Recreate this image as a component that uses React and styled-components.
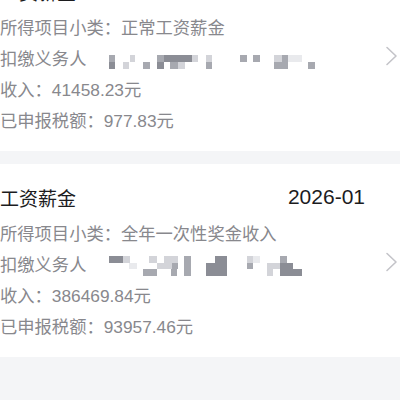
import React from 'react';
import styled, { createGlobalStyle } from 'styled-components';

const GlobalStyle = createGlobalStyle`
  html, body {
    margin: 0;
    padding: 0;
    background: #f4f5f7;
  }
  body {
    width: 400px;
    height: 400px;
    overflow: hidden;
    font-family: 'Liberation Sans', 'Noto Sans CJK SC', sans-serif;
  }
`;

const List = styled.div`
  display: flex;
  flex-direction: column;
  gap: 13px;
  margin-top: -42px;
`;

const Card = styled.div`
  display: flex;
  align-items: center;
  height: 193px;
  box-sizing: border-box;
  background: #ffffff;
  padding: 18px 2px 15px 0;
`;

const Content = styled.div`
  flex: 1;
  display: flex;
  flex-direction: column;
  align-self: stretch;
  margin-right: 20px;
`;

const TitleRow = styled.div`
  display: flex;
  align-items: center;
  justify-content: space-between;
  height: 30px;
  margin-bottom: 5px;
`;

const Title = styled.span`
  font-size: 19px;
  color: #1c1c1e;
`;

const Period = styled.span`
  font-size: 21px;
  color: #1c1c1e;
`;

const Row = styled.div`
  display: flex;
  align-items: center;
  height: 31px;
  font-size: 17.3px;
  color: #88888d;
  white-space: nowrap;
`;

const Mosaic = styled.svg`
  flex: none;
  margin-left: 14px;
`;

const Chevron = styled.svg`
  flex: none;
`;

const tones = {
  d: '#8b8d95',
  m: '#a7a9b0',
  l: '#d3d4d9',
  xl: '#e9eaed',
};

const blur1 = [
  [9, 9, 6, 'm'], [30, 9, 5, 'l'], [57, 9, 7, 'm'], [64, 9, 28, 'd'], [92, 9, 6, 'l'],
  [106, 9, 6, 'l'], [140, 9, 7, 'm'], [153, 9, 7, 'm'], [174, 9, 8, 'l'], [182, 9, 6, 'm'],
  [188, 9, 14, 'xl'],
  [9, 16, 6, 'd'], [23, 16, 6, 'l'], [43, 16, 7, 'm'], [57, 16, 7, 'd'], [70, 16, 8, 'm'],
  [78, 16, 7, 'l'], [106, 16, 6, 'm'], [174, 16, 14, 'm'], [208, 16, 7, 'm'],
];

const blur2 = [
  [9, 4, 14, 'd', 7], [23, 4, 7, 'l', 7], [49, 4, 8, 'l', 7], [64, 4, 8, 'l', 7], [72, 4, 6, 'l', 7],
  [84, 4, 7, 'm', 7], [115, 4, 12, 'd', 7], [147, 4, 6, 'l', 7], [153, 4, 7, 'xl', 7], [180, 4, 7, 'm', 7],
  [29, 11, 8, 'xl', 6], [57, 11, 7, 'l', 6], [64, 11, 8, 'l', 6], [72, 11, 6, 'm', 6], [84, 11, 7, 'm', 6],
  [106, 11, 21, 'd', 6], [147, 11, 6, 'm', 6], [167, 11, 13, 'l', 6], [180, 11, 13, 'd', 6],
  [43, 17, 14, 'm', 7], [71, 17, 6, 'm', 7], [84, 17, 7, 'm', 7], [106, 17, 21, 'd', 7],
  [167, 17, 6, 'l', 7], [180, 17, 22, 'd', 7],
];

const records = [
  {
    title: '工资薪金',
    period: '2026-01',
    sub: '正常工资薪金',
    income: '41458.23元',
    tax: '977.83元',
    blur: blur1,
  },
  {
    title: '工资薪金',
    period: '2026-01',
    sub: '全年一次性奖金收入',
    income: '386469.84元',
    tax: '93957.46元',
    blur: blur2,
  },
];

const Blurred = ({ blocks }) => (
  <Mosaic width="220" height="24" viewBox="0 0 220 24">
    {blocks.map(([x, y, w, t, h = 7], i) => (
      <rect key={i} x={x} y={y} width={w} height={h} fill={tones[t]} />
    ))}
  </Mosaic>
);

const RecordCard = ({ item }) => (
  <Card>
    <Content>
      <TitleRow>
        <Title>{item.title}</Title>
        <Period>{item.period}</Period>
      </TitleRow>
      <Row>所得项目小类：{item.sub}</Row>
      <Row>
        扣缴义务人
        <Blurred blocks={item.blur} />
      </Row>
      <Row>收入：{item.income}</Row>
      <Row>已申报税额：{item.tax}</Row>
    </Content>
    <Chevron width="13" height="20" viewBox="0 0 13 20">
      <path d="M2 1.5 L11 10 L2 18.5" fill="none" stroke="#c4c4c9" strokeWidth="1.6" strokeLinecap="round" strokeLinejoin="round" />
    </Chevron>
  </Card>
);

const App = () => (
  <React.Fragment>
    <GlobalStyle />
    <List>
      {records.map((item, i) => (
        <RecordCard key={i} item={item} />
      ))}
    </List>
  </React.Fragment>
);

export default App;
